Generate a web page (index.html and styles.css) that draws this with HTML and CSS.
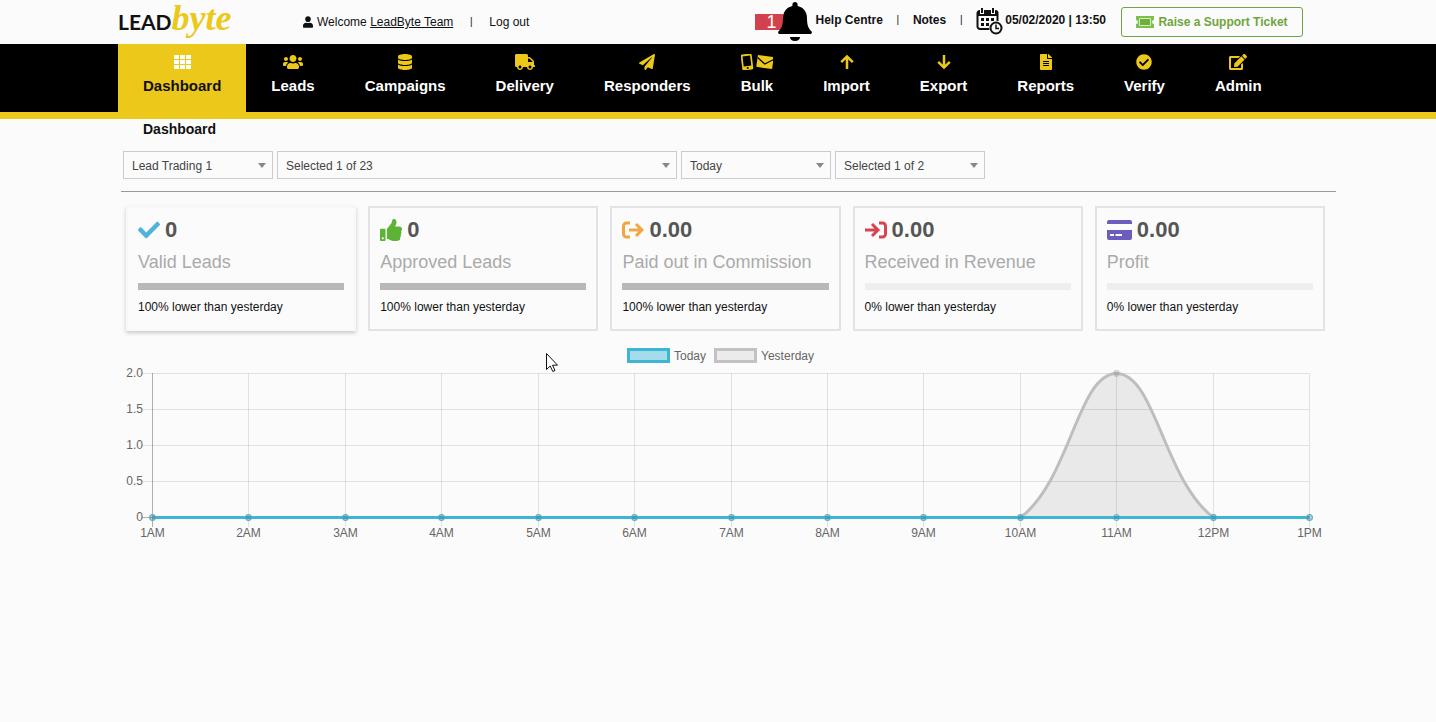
FILE: index.html
```html
<!DOCTYPE html>
<html lang="en">
<head>
    <meta charset="UTF-8">
    <meta name="viewport" content="width=device-width, initial-scale=1">
    <title>LeadByte - Dashboard</title>
    <link rel="stylesheet" href="styles.css">
</head>
<body>
    <header class="topbar container">
        <a href="#" class="logo"><span class="logo-lead">LEAD</span><span class="logo-byte">byte</span></a>
        <div class="account">
            <svg class="icon-user" viewBox="0 0 448 512"><path d="M224 256c70.7 0 128-57.3 128-128S294.7 0 224 0 96 57.3 96 128s57.3 128 128 128zm89.6 32h-16.700c-22.200 10.200-46.900 16-72.900 16s-50.600-5.800-72.900-16h-16.700C60.200 288 0 348.200 0 422.400V464c0 26.500 21.500 48 48 48h352c26.500 0 48-21.500 48-48v-41.600c0-74.200-60.200-134.400-134.400-134.400z"/></svg>
            <span>Welcome <a href="#" class="user-link">LeadByte Team</a></span>
            <span class="sep">|</span>
            <a href="#">Log out</a>
        </div>
        <div class="tools">
            <div class="alerts">
                <span class="alert-count">1</span>
                <svg class="icon-bell" viewBox="0 0 34 40"><path d="M17 1c1.500 0 2.600 1.100 2.600 2.500v1.500C25.500 6.300 29 11 29 17c0 7.500 1.500 10.500 4.400 13.200 1 1.200.4 2.800-1.200 2.800H1.800C.2 33-.4 31.400.6 30.200 3.500 27.500 5 24.500 5 17 5 11 8.500 6.300 14.400 5V3.500C14.400 2.100 15.500 1 17 1zM12 36h10c0 2.500-2.200 4-5 4s-5-1.500-5-4z"/></svg>
            </div>
            <a href="#">Help Centre</a>
            <span class="sep">|</span>
            <a href="#">Notes</a>
            <span class="sep">|</span>
            <div class="clock">
                <svg class="icon-calendar" viewBox="0 0 27 27">
                    <path d="M14 21H4a2.500 2.500 0 0 1-2.500-2.500V5A2 2 0 0 1 3.500 3h16a2 2 0 0 1 2 2v8" fill="none" stroke="#111" stroke-width="2"/>
                    <path d="M2 3h19v5H2z"/>
                    <path d="M6 0v6M17 0v6" stroke="#fbfbfc" stroke-width="4"/>
                    <path d="M6 0v5M17 0v5" stroke="#111" stroke-width="2"/>
                    <path d="M5 10h3v3H5zM10 10h3v3h-3zM15 10h3v3h-3zM5 15h3v3H5zM10 15h3v3h-3z"/>
                    <circle cx="20" cy="20" r="7" fill="#fbfbfc"/>
                    <circle cx="20" cy="20" r="5.500" fill="none" stroke="#111" stroke-width="2"/>
                    <path d="M20 16.500V20.500H23" fill="none" stroke="#111" stroke-width="1.500"/>
                </svg>
                <span>05/02/2020 | 13:50</span>
            </div>
        </div>
        <button type="button" class="ticket-btn">
            <svg class="icon-ticket" viewBox="0 0 18 12"><path d="M0 0h18v4a2 2 0 0 0 0 4v4H0V8a2 2 0 0 0 0-4z" fill="#7cc04b"/><path d="M3.500 2.500h11v7h-11z" fill="#6fb03c" stroke="#d5edbf"/></svg>
            Raise a Support Ticket
        </button>
    </header>

    <nav class="navbar">
        <ul class="nav-list container">
            <li><a href="#" class="nav-link active">
                <svg viewBox="0 0 17 16"><path d="M0 1h5v4H0zM6 1h5v4H6zM12 1h5v4h-5zM0 6h5v4H0zM6 6h5v4H6zM12 6h5v4h-5zM0 11h5v4H0zM6 11h5v4H6zM12 11h5v4h-5z"/></svg>
                Dashboard</a></li>
            <li><a href="#" class="nav-link">
                <svg viewBox="0 0 640 512"><path d="M96 224c35.300 0 64-28.700 64-64s-28.700-64-64-64-64 28.700-64 64 28.700 64 64 64zm448 0c35.300 0 64-28.700 64-64s-28.700-64-64-64-64 28.700-64 64 28.700 64 64 64zm32 32h-64c-17.600 0-33.500 7.100-45.100 18.600 40.300 22.100 68.900 62 75.100 109.400h66c17.700 0 32-14.300 32-32v-32c0-35.300-28.700-64-64-64zm-256 0c61.900 0 112-50.100 112-112S381.900 32 320 32 208 82.100 208 144s50.100 112 112 112zm76.800 32h-8.300c-20.800 10-43.900 16-68.500 16s-47.600-6-68.500-16h-8.300C179.600 288 128 339.600 128 403.200V432c0 26.500 21.500 48 48 48h288c26.500 0 48-21.500 48-48v-28.800c0-63.600-51.600-115.200-115.200-115.200zm-223.700-13.400C161.500 263.100 145.600 256 128 256H64c-35.300 0-64 28.700-64 64v32c0 17.700 14.300 32 32 32h65.900c6.300-47.400 34.900-87.300 75.200-109.400z"/></svg>
                Leads</a></li>
            <li><a href="#" class="nav-link">
                <svg viewBox="0 0 448 512"><path d="M448 73v46c0 40-100 73-224 73S0 159 0 119V73C0 33 100 0 224 0s224 33 224 73zM448 176v103c0 40-100 73-224 73S0 319 0 279V176c48 33 136 49 224 49s176-16 224-49zm0 160v103c0 40-100 73-224 73S0 479 0 439V336c48 33 136 49 224 49s176-16 224-49z"/></svg>
                Campaigns</a></li>
            <li><a href="#" class="nav-link">
                <svg viewBox="0 0 640 512"><path d="M624 352h-16V243.900c0-12.700-5.100-24.900-14.100-33.900L494 110.100c-9-9-21.200-14.100-33.900-14.100H416V48c0-26.500-21.500-48-48-48H48C21.500 0 0 21.500 0 48v320c0 26.500 21.500 48 48 48h16c0 53 43 96 96 96s96-43 96-96h128c0 53 43 96 96 96s96-43 96-96h48c8.800 0 16-7.200 16-16v-32c0-8.800-7.200-16-16-16zM160 464c-26.500 0-48-21.500-48-48s21.500-48 48-48 48 21.500 48 48-21.500 48-48 48zm320 0c-26.500 0-48-21.500-48-48s21.500-48 48-48 48 21.500 48 48-21.500 48-48 48zm80-208H416V144h44.100l99.900 99.900V256z"/></svg>
                Delivery</a></li>
            <li><a href="#" class="nav-link">
                <svg viewBox="0 0 512 512"><path d="M476 3.200L12.500 270.600c-18.100 10.400-15.800 35.600 2.200 43.200L121 358.400l287.300-253.200c5.500-4.900 13.300 2.600 8.600 8.300L176 407v80.500c0 23.600 28.500 32.900 42.500 15.800L282 426l124.600 52.200c14.200 6 30.400-2.900 33-18.200l72-432C515 7.800 493.300-6.800 476 3.200z"/></svg>
                Responders</a></li>
            <li><a href="#" class="nav-link">
                <svg viewBox="0 0 32 16"><g transform="rotate(-7 6 8)"><path fill-rule="evenodd" d="M2 0h8a1.500 1.500 0 0 1 1.500 1.500v13A1.500 1.500 0 0 1 10 16H2a1.500 1.500 0 0 1-1.500-1.500v-13A1.500 1.500 0 0 1 2 0zm.2 2v10h7.600V2zM6 13a1 1 0 1 0 0 2 1 1 0 0 0 0-2z"/></g><g transform="rotate(8 24 8)"><path d="M16 2h16v12H16z"/><path d="M16 4.500l8 5.500 8-5.500" fill="none" stroke="#000" stroke-width="1.300"/></g></svg>
                Bulk</a></li>
            <li><a href="#" class="nav-link">
                <svg viewBox="0 0 16 16"><path d="M8 15V3M2.200 8.200L8 2.400l5.800 5.800" fill="none" stroke="currentColor" stroke-width="2.500"/></svg>
                Import</a></li>
            <li><a href="#" class="nav-link">
                <svg viewBox="0 0 16 16"><path d="M8 1v12M2.200 7.800L8 13.600l5.800-5.800" fill="none" stroke="currentColor" stroke-width="2.500"/></svg>
                Export</a></li>
            <li><a href="#" class="nav-link">
                <svg viewBox="0 0 384 512"><path d="M224 136V0H24C10.700 0 0 10.700 0 24v464c0 13.300 10.700 24 24 24h336c13.300 0 24-10.700 24-24V160H248c-13.200 0-24-10.800-24-24zm64 236c0 6.600-5.400 12-12 12H108c-6.600 0-12-5.400-12-12v-8c0-6.600 5.400-12 12-12h168c6.600 0 12 5.400 12 12v8zm0-64c0 6.600-5.400 12-12 12H108c-6.600 0-12-5.400-12-12v-8c0-6.600 5.400-12 12-12h168c6.600 0 12 5.400 12 12v8zm0-72v8c0 6.600-5.400 12-12 12H108c-6.600 0-12-5.400-12-12v-8c0-6.600 5.400-12 12-12h168c6.600 0 12 5.400 12 12zm96-114.100v6.100H256V0h6.100c6.400 0 12.500 2.500 17 7l97.900 98c4.500 4.500 7 10.600 7 16.900z"/></svg>
                Reports</a></li>
            <li><a href="#" class="nav-link">
                <svg viewBox="0 0 512 512"><path d="M504 256c0 137-111 248-248 248S8 393 8 256 119 8 256 8s248 111 248 248zM227.300 387.300l184-184c6.200-6.200 6.200-16.400 0-22.600l-22.600-22.600c-6.200-6.200-16.400-6.200-22.600 0L216 308.100l-70.100-70.100c-6.200-6.200-16.400-6.200-22.600 0l-22.600 22.600c-6.200 6.200-6.200 16.400 0 22.600l104 104c6.200 6.300 16.400 6.300 22.600.1z"/></svg>
                Verify</a></li>
            <li><a href="#" class="nav-link">
                <svg viewBox="0 0 576 512"><path d="M402.600 83.200l90.200 90.200c3.800 3.800 3.800 10 0 13.800L274.400 405.600l-92.800 10.300c-12.400 1.400-22.900-9.100-21.500-21.500l10.300-92.800L388.800 83.200c3.800-3.800 10-3.800 13.800 0zm162-22.900l-48.800-48.800c-15.200-15.200-39.900-15.200-55.200 0l-35.400 35.400c-3.800 3.800-3.800 10 0 13.800l90.200 90.200c3.800 3.800 10 3.800 13.800 0l35.400-35.400c15.200-15.300 15.200-40 0-55.200zM384 346.200V448H64V128h229.800c3.200 0 6.200-1.300 8.500-3.500l40-40c7.600-7.600 2.200-20.500-8.500-20.500H48C21.500 64 0 85.500 0 112v352c0 26.500 21.500 48 48 48h352c26.500 0 48-21.500 48-48V306.200c0-10.700-12.900-16-20.500-8.500l-40 40c-2.200 2.300-3.500 5.300-3.500 8.500z"/></svg>
                Admin</a></li>
        </ul>
    </nav>

    <main class="dashboard">
        <h1>Dashboard</h1>

        <form class="filters">
            <div class="select-box">
                <select aria-label="Account"><option>Lead Trading 1</option></select>
            </div>
            <div class="select-box wide">
                <select aria-label="Campaigns"><option>Selected 1 of 23</option></select>
            </div>
            <div class="select-box">
                <select aria-label="Period"><option>Today</option></select>
            </div>
            <div class="select-box">
                <select aria-label="Currency"><option>Selected 1 of 2</option></select>
            </div>
        </form>

        <section class="cards">
            <div class="card raised">
                <div class="card-value">
                    <svg class="blue" viewBox="0 0 512 512"><path d="M173.900 439.400L7.500 273c-10-10-10-26.200 0-36.200l36.200-36.200c10-10 26.200-10 36.200 0L192 312.700 432.100 72.600c10-10 26.200-10 36.200 0l36.200 36.200c10 10 10 26.200 0 36.200L210.100 439.400c-10 10-26.200 10-36.200 0z"/></svg>
                    <span>0</span>
                </div>
                <h2>Valid Leads</h2>
                <div class="bar"><div class="bar-fill" style="width: 100%"></div></div>
                <p>100% lower than yesterday</p>
            </div>
            <div class="card">
                <div class="card-value">
                    <svg class="green" viewBox="0 0 512 512"><path d="M104 224H24c-13.300 0-24 10.700-24 24v240c0 13.300 10.700 24 24 24h80c13.300 0 24-10.700 24-24V248c0-13.300-10.700-24-24-24zM64 472c-13.300 0-24-10.700-24-24s10.700-24 24-24 24 10.700 24 24-10.700 24-24 24zM384 81.500c0 42.400-26 66.200-33.300 94.500h101.700c33.400 0 59.400 27.700 59.600 58.100.1 17.900-7.500 37.200-19.400 49.200l-.1.1c9.800 23.300 8.200 56-9.300 79.500 8.700 25.900-.1 57.700-16.400 74.800 4.300 17.600 2.200 32.600-6.100 44.600C440.200 511.600 389.600 512 346.800 512H344c-48.300 0-87.800-17.600-119.600-31.700-16-7.100-36.800-15.900-52.700-16.200-6.500-.1-11.700-5.500-11.700-12V238.300c0-3.200 1.300-6.300 3.600-8.500 39.600-39.100 56.600-80.600 89.100-113.100 14.800-14.800 20.200-37.200 25.400-58.900C282.500 39.300 291.800 0 312 0c24 0 72 8 72 81.500z"/></svg>
                    <span>0</span>
                </div>
                <h2>Approved Leads</h2>
                <div class="bar"><div class="bar-fill" style="width: 100%"></div></div>
                <p>100% lower than yesterday</p>
            </div>
            <div class="card">
                <div class="card-value">
                    <svg class="orange" viewBox="0 0 22 22"><path d="M8 4H4.500A3 3 0 0 0 1.500 7v8a3 3 0 0 0 3 3H8M7 11h13M14 5l6 6-6 6" fill="none" stroke="currentColor" stroke-width="3"/></svg>
                    <span>0.00</span>
                </div>
                <h2>Paid out in Commission</h2>
                <div class="bar"><div class="bar-fill" style="width: 100%"></div></div>
                <p>100% lower than yesterday</p>
            </div>
            <div class="card">
                <div class="card-value">
                    <svg class="red" viewBox="0 0 22 22"><path d="M14 4h3.500a3 3 0 0 1 3 3v8a3 3 0 0 1-3 3H14M0 11h13M7 5l6 6-6 6" fill="none" stroke="currentColor" stroke-width="3"/></svg>
                    <span>0.00</span>
                </div>
                <h2>Received in Revenue</h2>
                <div class="bar"><div class="bar-fill" style="width: 0%"></div></div>
                <p>0% lower than yesterday</p>
            </div>
            <div class="card">
                <div class="card-value">
                    <svg class="purple" viewBox="0 0 25 22"><path fill-rule="evenodd" d="M2 1h21a2 2 0 0 1 2 2v2H0V3a2 2 0 0 1 2-2zM0 11h25v8a2 2 0 0 1-2 2H2a2 2 0 0 1-2-2zm3 4v2h4v-2zm5.500 0v2H15v-2z"/></svg>
                    <span>0.00</span>
                </div>
                <h2>Profit</h2>
                <div class="bar"><div class="bar-fill" style="width: 0%"></div></div>
                <p>0% lower than yesterday</p>
            </div>
        </section>

        <section class="chart">
            <div class="legend">
                <span class="swatch today"></span><span>Today</span>
                <span class="swatch yesterday"></span><span>Yesterday</span>
            </div>
            <svg id="leadsChart" class="plot" viewBox="0 0 1199 180"></svg>
            <svg class="pointer" viewBox="0 0 12 19"><path d="M.5.5v16l3.700-3.500 2.600 5.500 2.200-1-2.500-5.300h5z" fill="#fff" stroke="#111"/></svg>
        </section>
    </main>

    <script>
        const labels = ['1AM', '2AM', '3AM', '4AM', '5AM', '6AM', '7AM', '8AM', '9AM', '10AM', '11AM', '12PM', '1PM'];
        const today = [0, 0, 0, 0, 0, 0, 0, 0, 0, 0, 0, 0, 0];
        const yesterday = [0, 0, 0, 0, 0, 0, 0, 0, 0, 0, 2, 0, 0];
        const ticks = ['0', '0.5', '1.0', '1.5', '2.0'];

        const left = 31, right = 1188, top0 = 9, bottom = 153;
        const xPos = i => Math.round(left + i * (right - left) / (labels.length - 1)) + 0.5;
        const yPos = v => bottom - v * (bottom - top0) / 2 + 0.5;

        // smooth curve, control points kept inside the plot area
        function curve(data) {
            const pts = data.map((v, i) => [xPos(i), yPos(v)]);
            const ctrl = pts.map((p, i) => {
                const a = pts[Math.max(i - 1, 0)];
                const b = pts[Math.min(i + 1, pts.length - 1)];
                const d1 = Math.hypot(p[0] - a[0], p[1] - a[1]);
                const d2 = Math.hypot(b[0] - p[0], b[1] - p[1]);
                const f1 = 0.4 * d1 / (d1 + d2);
                const f2 = 0.4 * d2 / (d1 + d2);
                const cap = y => Math.min(yPos(0), Math.max(yPos(2), y));
                return {
                    before: [p[0] - f1 * (b[0] - a[0]), cap(p[1] - f1 * (b[1] - a[1]))],
                    after: [p[0] + f2 * (b[0] - a[0]), cap(p[1] + f2 * (b[1] - a[1]))]
                };
            });
            let d = `M${pts[0]}`;
            for (let i = 1; i < pts.length; i++) {
                d += ` C${ctrl[i - 1].after} ${ctrl[i].before} ${pts[i]}`;
            }
            return d;
        }

        function drawSeries(name, data) {
            const d = curve(data);
            const dots = data.map((v, i) => `<circle class="dot" cx="${xPos(i)}" cy="${yPos(v)}" r="3"/>`).join('');
            return `<g class="${name}"><path class="area" d="${d} V${bottom} H${left} Z"/><path class="line" d="${d}"/>${dots}</g>`;
        }

        let svg = '';
        ticks.forEach((t, i) => {
            const y = yPos(Number(t));
            svg += `<path class="${i === 0 ? 'axis' : 'grid'}" d="M${left - 10} ${y}H${right}"/>`;
            svg += `<text x="${left - 9}" y="${y + 3}" text-anchor="end">${t}</text>`;
        });
        labels.forEach((t, i) => {
            const x = xPos(i);
            svg += `<path class="${i === 0 ? 'axis' : 'grid'}" d="M${x} ${top0}V${bottom + 10}"/>`;
            svg += `<text x="${x}" y="${bottom + 20}" text-anchor="middle">${t}</text>`;
        });
        svg += drawSeries('series-yesterday', yesterday);
        svg += drawSeries('series-today', today);
        document.getElementById('leadsChart').innerHTML = svg;
    </script>
</body>
</html>
```
FILE: styles.css
```css
* {
    box-sizing: border-box;
}
body {
    margin: 0;
    font-family: "Liberation Sans", Arial, Helvetica, sans-serif;
    font-size: 12px;
    line-height: 16px;
    background-color: #fbfbfc;
    color: #111;
}
a {
    color: inherit;
    text-decoration: none;
}
svg {
    display: block;
    fill: currentColor;
}
.container {
    width: 100%;
    max-width: 1200px;
    margin: 0 auto;
}

/* top bar */
.topbar {
    display: flex;
    align-items: center;
    height: 44px;
    padding-right: 15px;
}
.logo {
    display: flex;
    align-items: baseline;
    width: 185px;
    height: 44px;
    line-height: 36px;
}
.logo-lead {
    font-family: Lato, sans-serif;
    font-size: 21px;
    font-weight: bold;
    color: #111;
}
.logo-byte {
    font-family: "Liberation Serif", serif;
    font-size: 36px;
    font-style: italic;
    font-weight: bold;
    color: #ebc81a;
}
.account {
    display: flex;
    align-items: center;
}
.icon-user {
    width: 10px;
    height: 12px;
    margin-right: 4px;
}
.user-link {
    text-decoration: underline;
}
.sep {
    width: 30px;
    font-size: 10px;
    font-weight: normal;
    text-align: center;
}
.account .sep {
    width: 36px;
}
.tools {
    display: flex;
    align-items: center;
    height: 40px;
    margin-left: auto;
    margin-bottom: 4px;
    font-weight: bold;
}
.alerts {
    display: flex;
    align-items: center;
    height: 40px;
    margin-right: 4px;
}
.alert-count {
    width: 28px;
    height: 16px;
    padding-left: 12px;
    margin-top: 4px;
    margin-right: -5px;
    background-color: #d3414f;
    color: #fff;
    font-size: 18px;
    font-weight: normal;
    line-height: 16px;
}
.icon-bell {
    width: 34px;
    height: 40px;
    margin-top: 2px;
    color: #000;
}
.clock {
    display: flex;
    align-items: center;
}
.icon-calendar {
    width: 27px;
    height: 27px;
    margin-top: 2px;
    margin-right: 2px;
}
.ticket-btn {
    display: flex;
    align-items: center;
    justify-content: center;
    gap: 4px;
    width: 182px;
    height: 30px;
    margin-left: 15px;
    padding: 0;
    border: 1px solid #6fa53a;
    border-radius: 3px;
    background: none;
    color: #6fa53a;
    font-family: inherit;
    font-size: 12px;
    font-weight: bold;
    cursor: pointer;
}
.icon-ticket {
    width: 18px;
    height: 12px;
}

/* navigation */
.navbar {
    background-color: #000;
    border-bottom: 7px solid #ebc81a;
}
.nav-list {
    display: flex;
    padding: 0;
    list-style: none;
}
.nav-link {
    display: flex;
    flex-direction: column;
    align-items: center;
    gap: 7px;
    height: 68px;
    padding: 10px 25px 0;
    color: #fff;
    font-size: 15px;
    font-weight: bold;
    line-height: 18px;
}
.nav-link svg {
    height: 16px;
    color: #ebc81a;
}
.nav-link.active {
    background-color: #ebc81a;
    color: #111;
}
.nav-link.active svg {
    color: #fff;
}

/* dashboard */
.dashboard {
    max-width: 1236px;
    margin: 0 auto;
    padding-left: 21px;
}
h1 {
    margin: 0;
    padding: 2px 22px;
    font-size: 14px;
    line-height: 16px;
}
.filters {
    display: flex;
    gap: 4px;
    padding: 12px 2px;
    border-bottom: 1px solid #999;
}
.select-box {
    position: relative;
    width: 150px;
}
.select-box.wide {
    width: 400px;
}
.select-box::after {
    content: "";
    position: absolute;
    right: 7px;
    top: 12px;
    border: 4px solid transparent;
    border-top: 5px solid #888;
    border-bottom: 0;
    pointer-events: none;
}
select {
    display: block;
    width: 100%;
    height: 28px;
    padding: 1px 8px 0;
    border: 1px solid #ccc;
    border-radius: 0;
    background-color: #fbfbfb;
    color: #444;
    font-family: inherit;
    font-size: 12px;
    appearance: none;
}
.cards {
    display: grid;
    grid-template-columns: repeat(5, 1fr);
    gap: 12px;
    padding: 14px 11px 0 5px;
}
.card {
    height: 125px;
    padding: 11px 10px;
    border: 2px solid #e3e2e4;
}
.card.raised {
    border-color: #f8f8f9;
    box-shadow: 0 2px 4px rgba(0, 0, 0, 0.2);
}
.card-value {
    display: flex;
    align-items: center;
    gap: 5px;
    height: 22px;
    color: #555;
    font-size: 22px;
    font-weight: bold;
}
.card-value svg {
    height: 22px;
}
.card-value .blue {
    color: #4fb4da;
}
.card-value .green {
    color: #5cb335;
}
.card-value .orange {
    color: #f2a541;
}
.card-value .red {
    color: #d64550;
}
.card-value .purple {
    color: #6d5cbd;
}
.card h2 {
    margin: 11px 0;
    color: #aaa;
    font-size: 18px;
    font-weight: normal;
    line-height: 20px;
}
.card p {
    margin: 9px 0 0;
}
.bar {
    height: 7px;
    background-color: #eee;
}
.bar-fill {
    height: 7px;
    background-color: #b9b7b9;
}

/* chart */
.chart {
    position: relative;
    padding: 17px 16px 0 0;
    color: #666;
}
.legend {
    display: flex;
    justify-content: center;
    gap: 4px;
}
.swatch {
    width: 43px;
    height: 15px;
    border: 3px solid #c3c1c3;
    background-color: #ebebeb;
}
.swatch.today {
    border-color: #40b4d4;
    background-color: #a4dcea;
}
.swatch.yesterday {
    margin-left: 4px;
}
.plot {
    width: 100%;
    font-size: 12px;
    overflow: visible;
}
.plot text {
    fill: #666;
}
.grid {
    stroke: rgba(0, 0, 0, 0.1);
}
.axis {
    stroke: rgba(0, 0, 0, 0.3);
}
.line {
    fill: none;
    stroke-width: 3;
}
.series-yesterday {
    stroke: #bfbdbf;
}
.series-today {
    stroke: #40b4d4;
}
.area {
    fill: rgba(0, 0, 0, 0.07);
    stroke: none;
}
.series-today .area {
    fill: none;
}
.dot {
    fill: rgba(0, 0, 0, 0.1);
}
.pointer {
    position: absolute;
    left: 425px;
    top: 22px;
    width: 12px;
    height: 19px;
}
```
